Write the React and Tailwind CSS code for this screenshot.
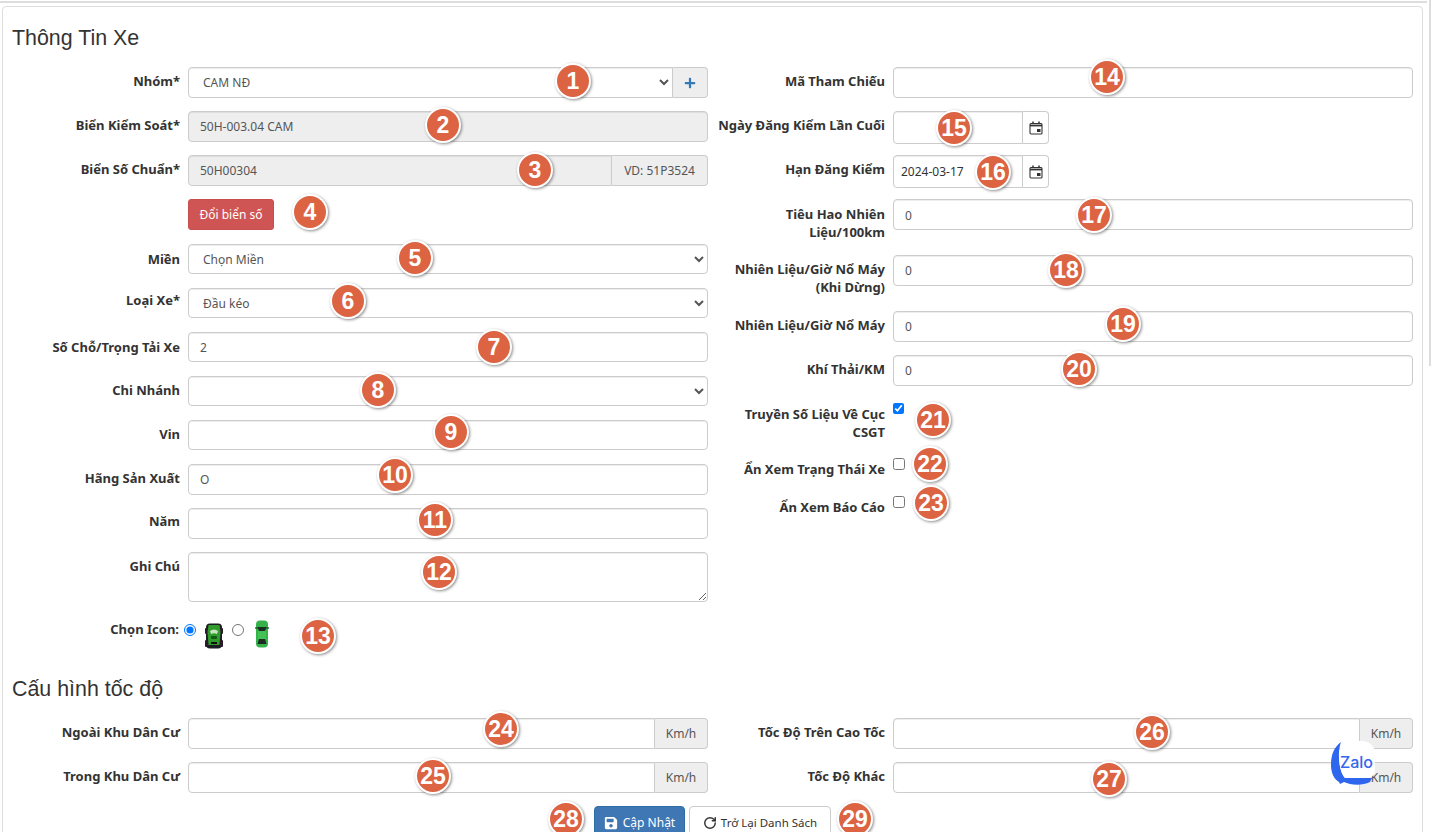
import { RotateCw } from "lucide-react";
import { FaPlus, FaSave } from "react-icons/fa";

const inputCls =
  "w-full h-full min-w-0 border border-[#ccc] rounded-[4px] bg-white px-[11px] text-[12px] text-[#555] outline-none shadow-[inset_0_1px_1px_rgba(0,0,0,0.075)]";
const selectCls = `${inputCls} !pl-[10px]`;

const badges = [
  { n: 1, cls: "left-[555px] top-[63px]" },
  { n: 2, cls: "left-[425px] top-[107px]" },
  { n: 3, cls: "left-[517px] top-[152px]" },
  { n: 4, cls: "left-[292px] top-[194px]" },
  { n: 5, cls: "left-[397px] top-[240px]" },
  { n: 6, cls: "left-[330px] top-[283px]" },
  { n: 7, cls: "left-[476px] top-[329px]" },
  { n: 8, cls: "left-[360px] top-[372px]" },
  { n: 9, cls: "left-[433px] top-[414px]" },
  { n: 10, cls: "left-[377px] top-[457px]" },
  { n: 11, cls: "left-[417px] top-[502px]" },
  { n: 12, cls: "left-[421px] top-[554px]" },
  { n: 13, cls: "left-[300px] top-[618px]" },
  { n: 14, cls: "left-[1089px] top-[59px]" },
  { n: 15, cls: "left-[936px] top-[110px]" },
  { n: 16, cls: "left-[975px] top-[154px]" },
  { n: 17, cls: "left-[1076px] top-[197px]" },
  { n: 18, cls: "left-[1048px] top-[252px]" },
  { n: 19, cls: "left-[1105px] top-[306px]" },
  { n: 20, cls: "left-[1061px] top-[351px]" },
  { n: 21, cls: "left-[915px] top-[402px]" },
  { n: 22, cls: "left-[912px] top-[446px]" },
  { n: 23, cls: "left-[913px] top-[485px]" },
  { n: 24, cls: "left-[483px] top-[711px]" },
  { n: 25, cls: "left-[415px] top-[758px]" },
  { n: 26, cls: "left-[1134px] top-[714px]" },
  { n: 27, cls: "left-[1091px] top-[761px]" },
  { n: 28, cls: "left-[548px] top-[801px]" },
  { n: 29, cls: "left-[837px] top-[801px]" },
];

const Field = ({
  label,
  wide,
  className = "h-[44px]",
  labelCls = "pt-[5px]",
  boxCls = "h-[31px]",
  children,
}) => (
  <div className={`flex gap-2 ${className}`}>
    <label
      className={`shrink-0 text-right text-[13px] leading-[18px] font-bold text-[#333] ${labelCls} ${
        wide ? "w-[170px]" : "w-[177px]"
      }`}
    >
      {label}
    </label>
    <div className={`w-[520px] flex ${boxCls}`}>{children}</div>
  </div>
);

const Addon = ({ children, className = "" }) => (
  <span
    className={`shrink-0 h-full flex items-center justify-center border border-l-0 border-[#ccc] rounded-r-[4px] bg-[#eee] text-[12px] text-[#555] ${className}`}
  >
    {children}
  </span>
);

const CalendarIcon = () => (
  <svg width="14" height="14" viewBox="0 0 14 14" fill="none" stroke="#333">
    <rect x="1" y="2.500" width="12" height="10.500" rx="1" strokeWidth="1.100" />
    <path d="M1 4.500h12" strokeWidth="1.800" />
    <path d="M4 .5v2.500M10 .5v2.500" strokeWidth="1.500" />
    <rect x="8" y="8" width="3.500" height="3" fill="#333" stroke="none" />
  </svg>
);

const DateInput = ({ value }) => (
  <div className="flex w-[156px] h-[33px]">
    <input
      readOnly
      defaultValue={value}
      className={`${inputCls} !px-[7px] rounded-r-none !text-[#333]`}
    />
    <span className="shrink-0 w-[26px] flex items-center justify-center border border-l-0 border-[#ccc] rounded-r-[4px]">
      <CalendarIcon />
    </span>
  </div>
);

const CarOne = () => (
  <svg width="18" height="26" viewBox="0 0 18 26">
    <rect x="1" y="0.500" width="16" height="25" rx="4" fill="#1c1c24" />
    <rect x="0" y="5" width="3" height="6" rx="1" fill="#2a1a2a" />
    <rect x="15" y="5" width="3" height="6" rx="1" fill="#2a1a2a" />
    <rect x="0" y="17" width="3" height="7" rx="1" fill="#2a1a2a" />
    <rect x="15" y="17" width="3" height="7" rx="1" fill="#2a1a2a" />
    <path d="M3.500 2h11l1 7-1 13h-11l-1-13z" fill="#2f9c2c" />
    <path d="M5 8q4-3 8 0l-1 3q-3-1.500-6 0z" fill="#c7e6c0" />
    <rect x="6" y="13" width="6" height="3" rx="1" fill="#0f5c12" />
    <rect x="6" y="19" width="6" height="2" fill="#111" />
  </svg>
);

const CarTwo = () => (
  <svg width="14" height="28" viewBox="0 0 14 28">
    <rect x="1" y="0.500" width="12" height="27" rx="4" fill="#35b24a" />
    <rect x="0" y="7" width="14" height="2" rx="1" fill="#1f7a30" />
    <path d="M2.500 7h9l-1.500 4H4z" fill="#1d2b22" />
    <rect x="3" y="11" width="8" height="8" fill="#42c157" />
    <path d="M4 19h6l1.500 5h-9z" fill="#1d2b22" />
  </svg>
);

const ZaloBadge = () => (
  <div className="absolute left-[1331px] top-[741px] w-[45px] h-[45px]">
    <svg width="45" height="45" viewBox="0 0 45 45" className="absolute inset-0">
      <path
        d="M10 1C3 6 0 14 0 24c0 8 3 14 8 17l1 2 4-2c6 3 18 4 26 0l2-4H14C8 30 6 12 10 1z"
        fill="#2f66ee"
      />
      <path
        d="M16 0h14c9 0 14 5 14 14v14c0 6-3 9-9 9H14C8 31 6 12 11 2c1-1 3-2 5-2z"
        fill="#fff"
      />
    </svg>
    <span className="absolute left-[9px] top-[11px] text-[16px] leading-[20px] font-medium text-[#3468ee] font-['Inter',sans-serif]">
      Zalo
    </span>
  </div>
);

export default function App() {
  return (
    <div className="relative h-[832px] overflow-hidden bg-white font-['Noto_Sans',sans-serif]">
      <div className="mt-px h-[2px] w-[1427px] bg-[#ddd]" />
      <div className="mt-[3px] ml-[2px] w-[1421px] h-[900px] border border-[#ddd] rounded-[4px]">
        <h2 className="ml-[9px] mt-[18px] h-[42px] text-[21.4px] leading-[26px] text-[#333] font-['Liberation_Sans',sans-serif]">
          Thông Tin Xe
        </h2>

        <div className="flex gap-[7px] h-[609px]">
          <div className="w-[705px]">
            <Field label="Nhóm*">
              <select className={`${selectCls} rounded-r-none`} defaultValue="CAM NĐ">
                <option>CAM NĐ</option>
              </select>
              <Addon className="w-[35px]">
                <FaPlus size={12} color="#337ab7" />
              </Addon>
            </Field>
            <Field label="Biển Kiểm Soát*">
              <input disabled defaultValue="50H-003.04 CAM" className={`${inputCls} !bg-[#eee]`} />
            </Field>
            <Field label="Biển Số Chuẩn*">
              <input disabled defaultValue="50H00304" className={`${inputCls} !bg-[#eee] rounded-r-none`} />
              <Addon className="w-[96px]">VD: 51P3524</Addon>
            </Field>
            <Field label="" className="h-[45px]">
              <button className="h-[31px] w-[86px] rounded-[3px] border border-[#c94f4f] bg-[#cf5454] text-[12px] text-white">
                Đổi biển số
              </button>
            </Field>
            <Field label="Miền" labelCls="pt-[6px]" boxCls="h-[30px]">
              <select className={selectCls} defaultValue="Chọn Miền">
                <option>Chọn Miền</option>
              </select>
            </Field>
            <Field label="Loại Xe*" labelCls="pt-[3px]" boxCls="h-[30px]">
              <select className={selectCls} defaultValue="Đầu kéo">
                <option>Đầu kéo</option>
              </select>
            </Field>
            <Field label="Số Chỗ/Trọng Tải Xe" labelCls="pt-[6px]" boxCls="h-[30px]">
              <input readOnly defaultValue="2" className={inputCls} />
            </Field>
            <Field label="Chi Nhánh" boxCls="h-[30px]">
              <select className={selectCls} defaultValue="">
                <option></option>
              </select>
            </Field>
            <Field label="Vin" boxCls="h-[30px]">
              <input readOnly className={inputCls} />
            </Field>
            <Field label="Hãng Sản Xuất">
              <input readOnly defaultValue="O" className={inputCls} />
            </Field>
            <Field label="Năm" labelCls="pt-[4px]">
              <input readOnly className={inputCls} />
            </Field>
            <Field label="Ghi Chú" className="h-[65px]" boxCls="h-[50px]">
              <textarea readOnly className={`${inputCls} py-[6px]`} />
            </Field>
            <div className="flex items-start">
              <label className="w-[176px] shrink-0 pt-[3px] text-right text-[13px] leading-[18px] font-bold text-[#333]">
                Chọn Icon:
              </label>
              <input type="radio" name="icon" defaultChecked className="w-[12px] h-[12px] ml-[5px] mt-[7px]" />
              <span className="ml-[9px] mt-[6px]">
                <CarOne />
              </span>
              <input type="radio" name="icon" className="w-[12px] h-[12px] ml-[9px] mt-[7px]" />
              <span className="ml-[11px] mt-[3px]">
                <CarTwo />
              </span>
            </div>
          </div>

          <div className="w-[699px]">
            <Field wide label="Mã Tham Chiếu">
              <input readOnly className={inputCls} />
            </Field>
            <Field wide label="Ngày Đăng Kiểm Lần Cuối">
              <DateInput />
            </Field>
            <Field wide label="Hạn Đăng Kiểm">
              <DateInput value="2024-03-17" />
            </Field>
            <Field wide label="Tiêu Hao Nhiên Liệu/100km" className="h-[56px]" labelCls="pt-[6px]">
              <input readOnly defaultValue="0" className={`${inputCls} pt-[2px]`} />
            </Field>
            <Field wide label="Nhiên Liệu/Giờ Nổ Máy (Khi Dừng)" className="h-[56px]">
              <input readOnly defaultValue="0" className={inputCls} />
            </Field>
            <Field wide label="Nhiên Liệu/Giờ Nổ Máy">
              <input readOnly defaultValue="0" className={inputCls} />
            </Field>
            <Field wide label="Khí Thải/KM" className="h-[45px]">
              <input readOnly defaultValue="0" className={inputCls} />
            </Field>
            <Field wide label="Truyền Số Liệu Về Cục CSGT" className="h-[55px]">
              <input type="checkbox" defaultChecked className="w-[11px] h-[11px] self-start mt-[3px]" />
            </Field>
            <Field wide label="Ẩn Xem Trạng Thái Xe" className="h-[38px]">
              <input type="checkbox" className="w-[12px] h-[12px] self-start mt-[3px]" />
            </Field>
            <Field wide label="Ẩn Xem Báo Cáo">
              <input type="checkbox" className="w-[12px] h-[12px] self-start mt-[3px]" />
            </Field>
          </div>
        </div>

        <h2 className="ml-[9px] h-[42px] text-[21.4px] leading-[26px] text-[#333] font-['Liberation_Sans',sans-serif]">
          Cấu hình tốc độ
        </h2>
        <div className="flex gap-[7px]">
          <div className="w-[705px]">
            <Field label="Ngoài Khu Dân Cư">
              <input readOnly className={`${inputCls} rounded-r-none`} />
              <Addon className="w-[53px]">Km/h</Addon>
            </Field>
            <Field label="Trong Khu Dân Cư">
              <input readOnly className={`${inputCls} rounded-r-none`} />
              <Addon className="w-[53px]">Km/h</Addon>
            </Field>
          </div>
          <div className="w-[699px]">
            <Field wide label="Tốc Độ Trên Cao Tốc">
              <input readOnly className={`${inputCls} rounded-r-none`} />
              <Addon className="w-[53px]">Km/h</Addon>
            </Field>
            <Field wide label="Tốc Độ Khác">
              <input readOnly className={`${inputCls} rounded-r-none`} />
              <Addon className="w-[53px]">Km/h</Addon>
            </Field>
          </div>
        </div>
        <div className="flex ml-[591px] gap-[4px]">
          <button className="flex items-center justify-center gap-[5px] h-[34px] w-[91px] rounded-[4px] border border-[#2e6da4] bg-[#3f76b4] text-[12px] text-white">
            <FaSave size={14} />
            Cập Nhật
          </button>
          <button className="flex items-center justify-center gap-[4px] h-[34px] w-[142px] whitespace-nowrap rounded-[4px] border border-[#ccc] bg-white text-[11.5px] text-[#333]">
            <RotateCw size={14} strokeWidth={2.5} />
            Trở Lại Danh Sách
          </button>
        </div>
      </div>

      <div className="absolute right-0 top-0 h-[366px] w-[2px] bg-[#ddd]" />

      {badges.map((b) => (
        <span
          key={b.n}
          className={`absolute ${b.cls} w-[36px] h-[36px] flex items-center justify-center rounded-full border-2 border-white bg-[#dc6443] text-[23px] font-bold text-white font-['Liberation_Sans',sans-serif] shadow-[1px_1px_3px_rgba(0,0,0,0.45)]`}
        >
          {b.n}
        </span>
      ))}

      <ZaloBadge />
    </div>
  );
}
